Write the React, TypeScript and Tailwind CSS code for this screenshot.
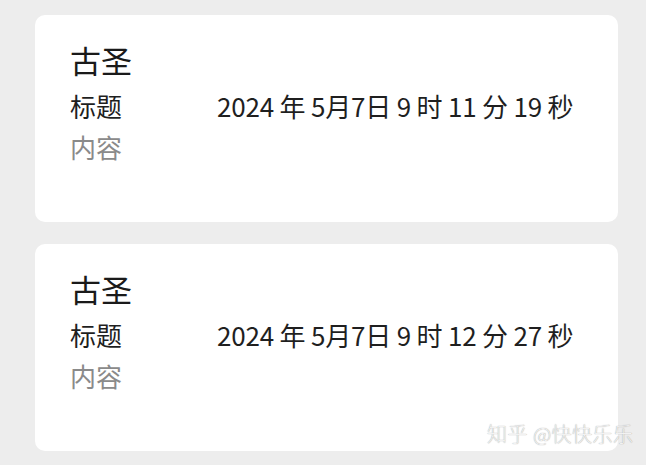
const items = [
  { name: '古圣', time: '2024 年 5月7日 9 时 11 分 19 秒' },
  { name: '古圣', time: '2024 年 5月7日 9 时 12 分 27 秒' },
]

const Card = ({ name, time }: { name: string; time: string }) => (
  <div className="w-[583px] h-[207px] rounded-[10px] bg-white pl-[35px] pt-[25px]">
    <div className="text-[31px] leading-[40px] text-[#1a1a1a]">{name}</div>
    <div className="flex items-center mt-[5px] text-[26px] leading-[41px] text-[#1f1f1f]">
      <div className="w-[147px] shrink-0">标题</div>
      <div className="tracking-[-0.2px]">{time}</div>
    </div>
    <div className="text-[26px] leading-[41px] text-[#8a8a8a]">内容</div>
  </div>
)

export default function App() {
  return (
    <div
      className="relative w-[646px] h-[465px] overflow-hidden bg-[#ededed] pt-[15px] pl-[35px] flex flex-col gap-[22px]"
      style={{ fontFamily: '"Noto Sans CJK SC", "Noto Sans", sans-serif' }}
    >
      {items.map((it, i) => (
        <Card key={i} name={it.name} time={it.time} />
      ))}
      <div className="absolute left-[487px] top-[421px] text-[20px] leading-[26px] font-light tracking-[0.5px] text-[#f2f2f2] [text-shadow:0_0_1px_rgba(0,0,0,0.45)]">
        知乎 @快快乐乐
      </div>
    </div>
  )
}
